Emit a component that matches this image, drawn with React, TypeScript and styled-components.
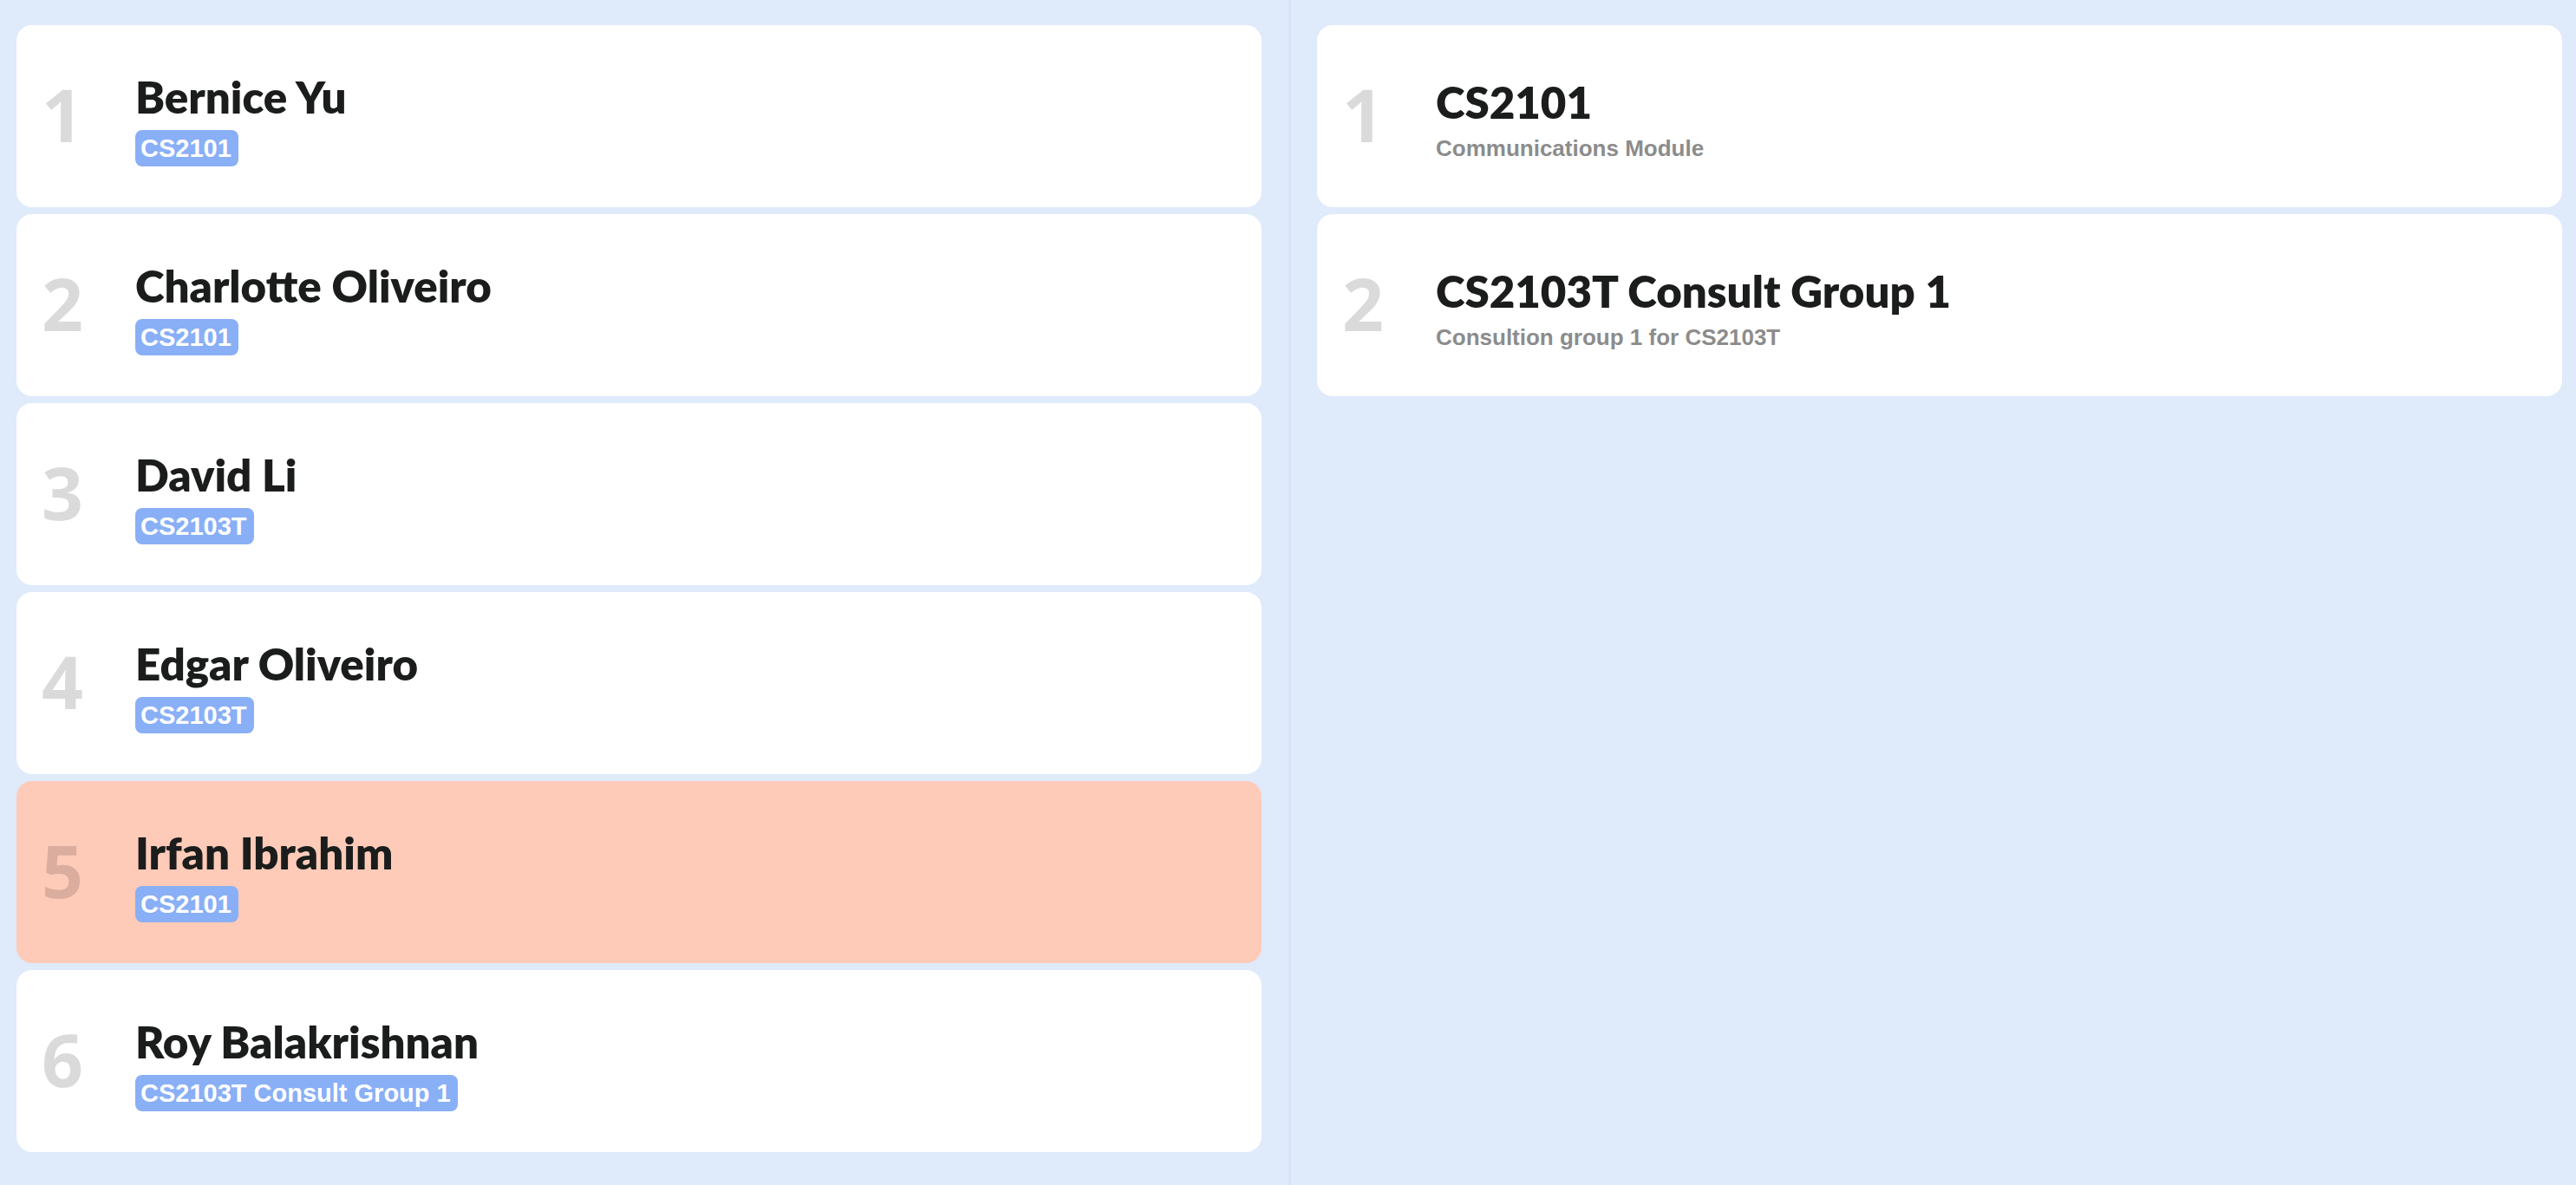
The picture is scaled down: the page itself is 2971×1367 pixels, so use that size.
import React from "react";
import styled, { createGlobalStyle } from "styled-components";

const GlobalStyle = createGlobalStyle`
  html, body {
    margin: 0;
    padding: 0;
    background: #dfeafa;
  }
  * { box-sizing: border-box; }
`;

const Page = styled.div`
  display: grid;
  grid-template-columns: 1486px 3px 1fr;
  min-height: 100vh;
  background: #dfeafa;
`;

const Panel = styled.div<{ $left?: boolean }>`
  display: flex;
  flex-direction: column;
  gap: 8px;
  padding: ${(p) => (p.$left ? "29px 31px 0 19px" : "29px 16px 0 30px")};
`;

const Divider = styled.div`
  background: #d6e4f9;
`;

const Card = styled.div<{ $highlight?: boolean }>`
  height: 210px;
  border-radius: 18px;
  background: ${(p) => (p.$highlight ? "#ffcbb9" : "#ffffff")};
  display: flex;
  align-items: flex-start;
`;

const Index = styled.div`
  width: 106px;
  height: 210px;
  flex: none;
  display: flex;
  align-items: center;
  justify-content: center;
  font-family: "Open Sans", sans-serif;
  font-weight: 700;
  font-size: 84px;
  line-height: 1;
  color: rgba(0, 0, 0, 0.145);
  padding-bottom: 4px;
`;

const Body = styled.div<{ $top: number }>`
  margin-left: 31px;
  padding-top: ${(p) => p.$top}px;
  display: flex;
  flex-direction: column;
  align-items: flex-start;
  gap: 8px;
`;

const Title = styled.div`
  font-family: Lato, "Open Sans", sans-serif;
  font-weight: 800;
  font-size: 51px;
  line-height: 60px;
  color: #1b1d1c;
  white-space: nowrap;
`;

const Tag = styled.span`
  display: inline-block;
  font-family: "Liberation Sans", Arial, sans-serif;
  font-weight: 700;
  font-size: 29px;
  line-height: 34px;
  padding: 4px 8px 4px 6px;
  border-radius: 8px;
  background: #89aff6;
  color: #ffffff;
  white-space: nowrap;
`;

const Subtitle = styled.div`
  font-family: "Liberation Sans", Arial, sans-serif;
  font-weight: 700;
  font-size: 26px;
  line-height: 30px;
  color: #8c8c8c;
  white-space: nowrap;
`;

type Person = { name: string; tag: string; highlight?: boolean };

const people: Person[] = [
  { name: "Bernice Yu", tag: "CS2101" },
  { name: "Charlotte Oliveiro", tag: "CS2101" },
  { name: "David Li", tag: "CS2103T" },
  { name: "Edgar Oliveiro", tag: "CS2103T" },
  { name: "Irfan Ibrahim", tag: "CS2101", highlight: true },
  { name: "Roy Balakrishnan", tag: "CS2103T Consult Group 1" },
];

const groups = [
  { name: "CS2101", desc: "Communications Module" },
  { name: "CS2103T Consult Group 1", desc: "Consultion group 1 for CS2103T" },
];

export default function App() {
  return (
    <>
      <GlobalStyle />
      <Page>
        <Panel $left>
          {people.map((p, i) => (
            <Card key={p.name} $highlight={p.highlight}>
              <Index>{i + 1}</Index>
              <Body $top={53}>
                <Title>{p.name}</Title>
                <Tag>{p.tag}</Tag>
              </Body>
            </Card>
          ))}
        </Panel>
        <Divider />
        <Panel>
          {groups.map((g, i) => (
            <Card key={g.name}>
              <Index>{i + 1}</Index>
              <Body $top={59}>
                <Title>{g.name}</Title>
                <Subtitle>{g.desc}</Subtitle>
              </Body>
            </Card>
          ))}
        </Panel>
      </Page>
    </>
  );
}
